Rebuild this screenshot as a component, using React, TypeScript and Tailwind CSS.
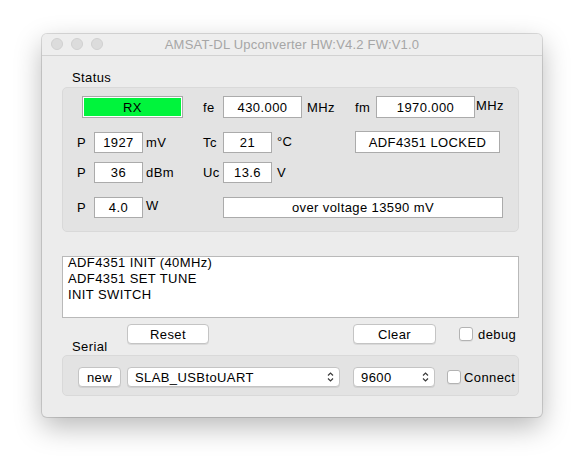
import React from "react";

const Field = ({ w, h = 21, children }: { w: number; h?: number; children: React.ReactNode }) => (
  <div
    className="shrink-0 bg-white border border-[#ababab] flex items-center justify-center text-[13px] tracking-[0.4px] text-black leading-none"
    style={{ width: w, height: h }}
  >
    {children}
  </div>
);

const Label = ({ w, children, className = "" }: { w?: number; children: React.ReactNode; className?: string }) => (
  <div className={"shrink-0 text-[13px] tracking-[0.4px] text-black leading-[15px] whitespace-nowrap " + className} style={w ? { width: w } : undefined}>
    {children}
  </div>
);

const Chevrons = () => (
  <svg width="7" height="12" viewBox="0 0 7 12">
    <path d="M1 4.5 L3.5 2 L6 4.5 M1 7.5 L3.5 10 L6 7.5" stroke="#3a3a3a" strokeWidth="1.2" fill="none" />
  </svg>
);

const Checkbox = () => (
  <div className="w-[14px] h-[14px] shrink-0 rounded-[3px] bg-white border border-[#b3b3b3] shadow-[0_1px_0_rgba(0,0,0,0.05)]" />
);

const Button = ({ w, children, className = "" }: { w: number; children: React.ReactNode; className?: string }) => (
  <div
    className={"shrink-0 h-[20px] rounded-[4px] bg-white border border-[#c4c4c4] shadow-[0_1px_0_rgba(0,0,0,0.08)] flex items-center justify-center text-[13px] tracking-[0.4px] text-black leading-none " + className}
    style={{ width: w }}
  >
    {children}
  </div>
);

export default function App() {
  return (
    <div className="w-[584px] h-[467px] bg-white pt-[34px] pl-[42px] font-['Liberation_Sans',Arial,sans-serif]">
      <div className="w-[500px] h-[383px] rounded-[5px] overflow-hidden bg-[#ececec] shadow-[0_0_0_1px_rgba(0,0,0,0.13),0_10px_28px_rgba(0,0,0,0.28)] flex flex-col">
        {/* title bar */}
        <div className="relative h-[22px] shrink-0 bg-[#eeeeee] border-b border-[#d2d2d2] flex items-center justify-center">
          <div className="absolute left-[9px] top-[4px] flex gap-[8px]">
            <div className="w-[12px] h-[12px] rounded-full bg-[#dcdcdc] border border-[#d0d0d0]" />
            <div className="w-[12px] h-[12px] rounded-full bg-[#dcdcdc] border border-[#d0d0d0]" />
            <div className="w-[12px] h-[12px] rounded-full bg-[#dcdcdc] border border-[#d0d0d0]" />
          </div>
          <span className="text-[13px] tracking-[0.2px] text-[#a6a6a6] leading-none">AMSAT-DL Upconverter HW:V4.2 FW:V1.0</span>
        </div>

        {/* Status label */}
        <div className="mt-[14px] ml-[30px] h-[15px] text-[13px] tracking-[0.4px] leading-[15px] text-black">Status</div>

        {/* Status group */}
        <div className="mt-[2px] ml-[20px] w-[457px] h-[145px] rounded-[5px] bg-[#e3e3e3] border border-[#d9d9d9] pt-[8px] flex flex-col">
          {/* row 1 */}
          <div className="h-[22px] flex items-center">
            <div className="ml-[19px] w-[101px] h-[22px] border border-[#a9a9a9] bg-white p-[1px] shrink-0">
              <div className="w-full h-full bg-[#00f43c] flex items-center justify-center text-[13px] tracking-[0.4px] text-black leading-none">RX</div>
            </div>
            <Label w={20} className="ml-[20px]">fe</Label>
            <Field w={79} h={22}>430.000</Field>
            <Label w={48} className="ml-[5px]">MHz</Label>
            <Label w={21}>fm</Label>
            <Field w={99} h={22}>1970.000</Field>
            <Label className="ml-[1px] mb-[3px]">MHz</Label>
          </div>
          {/* row 2 */}
          <div className="mt-[13px] h-[22px] flex items-center">
            <Label w={17} className="ml-[14px]">P</Label>
            <Field w={49}>1927</Field>
            <Label w={57} className="ml-[3px]">mV</Label>
            <Label w={20}>Tc</Label>
            <Field w={49}>21</Field>
            <Label w={78} className="ml-[5px] mb-[2px]">°C</Label>
            <Field w={145} h={22}>ADF4351 LOCKED</Field>
          </div>
          {/* row 3 */}
          <div className="mt-[9px] h-[21px] flex items-center">
            <Label w={17} className="ml-[14px]">P</Label>
            <Field w={49}>36</Field>
            <Label w={57} className="ml-[3px]">dBm</Label>
            <Label w={20}>Uc</Label>
            <Field w={49}>13.6</Field>
            <Label className="ml-[5px]">V</Label>
          </div>
          {/* row 4 */}
          <div className="mt-[14px] h-[21px] flex items-center">
            <Label w={17} className="ml-[14px]">P</Label>
            <Field w={49}>4.0</Field>
            <Label w={77} className="ml-[3px] mb-[4px]">W</Label>
            <Field w={280}>over voltage 13590 mV</Field>
          </div>
        </div>

        {/* log text area */}
        <div className="mt-[24px] ml-[20px] w-[457px] h-[62px] bg-white border border-[#b9b9b9] overflow-hidden pl-[5px]">
          <div className="-mt-[2px] text-[13px] tracking-[0.4px] leading-[16px] text-black">
            <div>ADF4351 INIT (40MHz)</div>
            <div>ADF4351 SET TUNE</div>
            <div>INIT SWITCH</div>
          </div>
        </div>

        {/* buttons row */}
        <div className="mt-[6px] h-[20px] flex items-center">
          <Button w={82} className="ml-[85px]">Reset</Button>
          <Button w={83} className="ml-[144px]">Clear</Button>
          <div className="ml-[23px]">
            <Checkbox />
          </div>
          <Label className="ml-[5px]">debug</Label>
        </div>

        {/* Serial label */}
        <div className="-mt-[5px] ml-[30px] h-[15px] text-[13px] tracking-[0.4px] leading-[15px] text-black">Serial</div>

        {/* Serial group */}
        <div className="mt-[1px] ml-[20px] w-[457px] h-[41px] rounded-[5px] bg-[#e3e3e3] border border-[#d9d9d9] pt-[11px]">
          <div className="h-[20px] flex items-center">
            <Button w={43} className="ml-[15px]">new</Button>
            <div className="ml-[6px] w-[213px] h-[20px] shrink-0 rounded-[4px] bg-white border border-[#c4c4c4] shadow-[0_1px_0_rgba(0,0,0,0.08)] flex items-center justify-between pl-[7px] pr-[5px] text-[13px] tracking-[0.4px] text-black leading-none">
              <span>SLAB_USBtoUART</span>
              <Chevrons />
            </div>
            <div className="ml-[13px] w-[82px] h-[20px] shrink-0 rounded-[4px] bg-white border border-[#c4c4c4] shadow-[0_1px_0_rgba(0,0,0,0.08)] flex items-center justify-between pl-[7px] pr-[5px] text-[13px] tracking-[0.4px] text-black leading-none">
              <span>9600</span>
              <Chevrons />
            </div>
            <div className="ml-[12px]">
              <Checkbox />
            </div>
            <Label className="ml-[3px]">Connect</Label>
          </div>
        </div>
      </div>
    </div>
  );
}
